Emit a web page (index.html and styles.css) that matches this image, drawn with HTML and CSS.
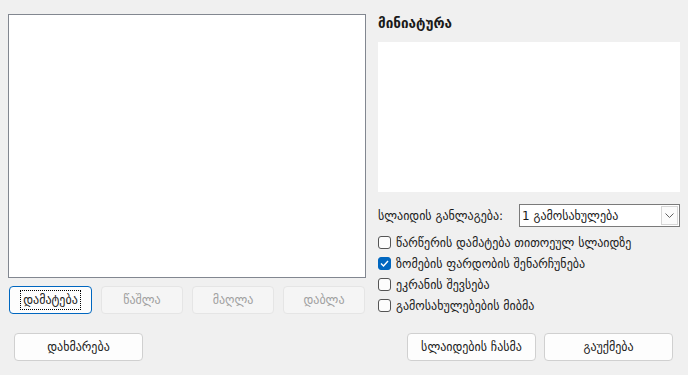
FILE: index.html
```html
<!DOCTYPE html>
<html lang="ka">
<head>
<meta charset="utf-8">
<title>სლაიდების ჩასმა</title>
<link rel="stylesheet" href="styles.css">
</head>
<body>
<div class="dialog">
  <div class="main">
    <div class="left">
      <div class="listbox"></div>
      <div class="list-buttons">
        <button class="btn focused"><span class="focus-ring">დამატება</span></button>
        <button class="btn" disabled>წაშლა</button>
        <button class="btn" disabled>მაღლა</button>
        <button class="btn" disabled>დაბლა</button>
      </div>
    </div>
    <div class="right">
      <div class="title">მინიატურა</div>
      <div class="preview"></div>
      <div class="layout-row">
        <span class="layout-label">სლაიდის განლაგება:</span>
        <div class="combo">
          <span class="combo-text">1 გამოსახულება</span>
          <span class="combo-btn">
            <svg width="9" height="5" viewBox="0 0 9 5"><path d="M0.5 0.5 L4.5 4.5 L8.5 0.5" fill="none" stroke="#606060" stroke-width="1"/></svg>
          </span>
        </div>
      </div>
      <label class="check"><span class="box"></span>წარწერის დამატება თითოეულ სლაიდზე</label>
      <label class="check"><span class="box checked"><svg width="9" height="7" viewBox="0 0 9 7"><path d="M1 3.5 L3.5 6 L8 1" fill="none" stroke="#fff" stroke-width="1.4"/></svg></span>ზომების ფარდობის შენარჩუნება</label>
      <label class="check"><span class="box"></span>ეკრანის შევსება</label>
      <label class="check"><span class="box"></span>გამოსახულებების მიბმა</label>
    </div>
  </div>
  <div class="footer">
    <button class="btn wide">დახმარება</button>
    <div class="footer-right">
      <button class="btn wide">სლაიდების ჩასმა</button>
      <button class="btn wide">გაუქმება</button>
    </div>
  </div>
</div>
</body>
</html>
```
FILE: styles.css
```css
html, body {
  margin: 0;
  padding: 0;
  background: #f0f0f0;
}
body {
  font-family: "DejaVu Sans", "Noto Sans", sans-serif;
  font-size: 12px;
  color: #1a1a1a;
}
.dialog {
  width: 688px;
  height: 375px;
  box-sizing: border-box;
  padding-top: 14px;
}
.main {
  display: flex;
  align-items: flex-start;
  padding-left: 8px;
}
.left {
  width: 358px;
}
.listbox {
  height: 264px;
  box-sizing: border-box;
  background: #fff;
  border: 1px solid #828790;
}
.list-buttons {
  display: flex;
  gap: 9px;
  margin-top: 8px;
  padding-left: 1px;
}
.btn {
  font-family: inherit;
  font-size: 12px;
  color: #1a1a1a;
  background: #fdfdfd;
  border: 1px solid #d0d0d0;
  border-radius: 4px;
  height: 28px;
  width: 82px;
  padding: 0;
  display: flex;
  align-items: center;
  justify-content: center;
}
.btn:disabled {
  background: #f5f5f5;
  border-color: #e5e5e5;
  color: #a0a0a0;
}
.btn.focused {
  border: 1px solid #0067c0;
  width: 83px;
}
.focus-ring {
  outline: 1px dotted #000;
  padding: 2px 2px;
}
.right {
  margin-left: 12px;
  width: 302px;
}
.title {
  font-weight: bold;
  font-size: 13.5px;
  height: 28px;
  line-height: 18px;
}
.preview {
  height: 150px;
  background: #fff;
}
.layout-row {
  display: flex;
  align-items: center;
  margin-top: 12px;
  margin-bottom: 5px;
}
.layout-label {
  width: 141px;
}
.combo {
  flex: 1;
  height: 23px;
  box-sizing: border-box;
  border: 1px solid #7a7a7a;
  background: #fff;
  display: flex;
  align-items: center;
  padding-left: 2px;
}
.combo-text {
  flex: 1;
}
.combo-btn {
  width: 17px;
  height: 19px;
  margin-right: 1px;
  box-sizing: border-box;
  border: 1px solid #d6d6d6;
  background: #fbfbfb;
  display: flex;
  align-items: center;
  justify-content: center;
}
.check {
  display: flex;
  align-items: center;
  gap: 5px;
  height: 21px;
}
.box {
  width: 13px;
  height: 13px;
  box-sizing: border-box;
  border: 1px solid #555;
  border-radius: 3px;
  background: #fcfcfc;
  display: flex;
  align-items: center;
  justify-content: center;
}
.box.checked {
  background: #0067c0;
  border-color: #0067c0;
}
.footer {
  display: flex;
  justify-content: space-between;
  margin-top: 17px;
  padding: 0 15px 0 14px;
}
.footer-right {
  display: flex;
  gap: 8px;
}
.btn.wide {
  width: 129px;
}
```
